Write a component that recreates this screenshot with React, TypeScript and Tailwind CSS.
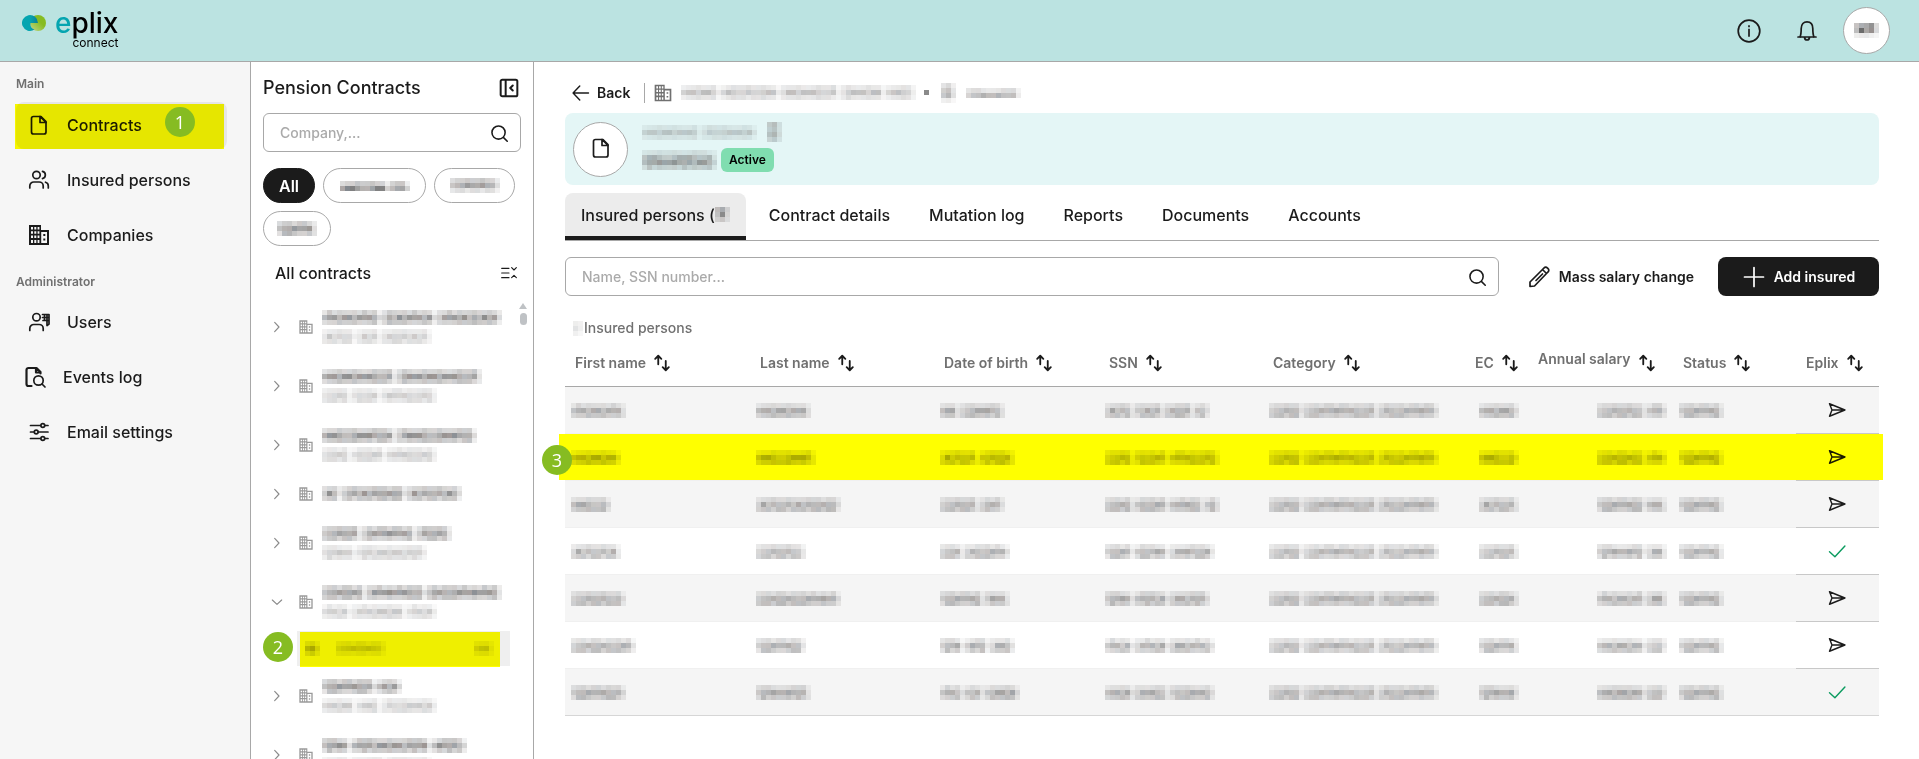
import { useState } from 'react';
import type { ReactNode } from 'react';

interface IconProps {
  className?: string;
}

function StrokeIcon({ className, children }: IconProps & { children: ReactNode }) {
  return (
    <svg
      viewBox="0 0 24 24"
      fill="none"
      stroke="currentColor"
      strokeWidth={1.7}
      strokeLinecap="round"
      strokeLinejoin="round"
      aria-hidden="true"
      className={`shrink-0 ${className ?? 'size-6'}`}
    >
      {children}
    </svg>
  );
}

const FileIcon = ({ className }: IconProps) => (
  <StrokeIcon className={className}>
    <path d="M6.5 3.5h7.5l5 5V19a2 2 0 0 1-2 2H6.500a2 2 0 0 1-2-2V5.500a2 2 0 0 1 2-2Z" />
    <path d="M13 3.500V9.500H19L13 3.500Z" />
  </StrokeIcon>
);

const UsersIcon = ({ className }: IconProps) => (
  <StrokeIcon className={className}>
    <circle cx="9.500" cy="7" r="3.700" />
    <path d="M2.800 20v-2a4 4 0 0 1 4-4h5.400a4 4 0 0 1 4 4v2" />
    <path d="M15.500 3.400a3.700 3.700 0 0 1 0 7.200M18.500 14.200a3.800 3.800 0 0 1 2.800 3.700V20" />
  </StrokeIcon>
);

const BuildingIcon = ({ className }: IconProps) => (
  <svg
    viewBox="0 0 24 24"
    fill="currentColor"
    fillRule="evenodd"
    aria-hidden="true"
    className={`shrink-0 ${className ?? 'size-6'}`}
  >
    <path d="M2 2h12v5h8v15H2V2Zm2 2v2.500h2V4H4Zm3.300 0v2.500h2V4h-2Zm3.300 0v2.500h1.800V4h-1.800ZM4 8.200v2.500h2V8.200H4Zm3.300 0v2.500h2V8.200h-2Zm3.300 0v2.500h1.800V8.200h-1.800ZM4 12.600v2.500h2v-2.500H4Zm3.300 0v2.500h2v-2.500h-2Zm3.300 0v2.500h1.800v-2.500h-1.800ZM4 17v3h2v-3H4Zm3.300 0v3h2v-3h-2Zm3.300 0v3h1.800v-3h-1.800ZM14.200 9v11H20V9h-5.800Z" />
    <path d="M16.300 11h2v2h-2zM16.300 15.500h2v2h-2z" />
  </svg>
);

const AdminUsersIcon = ({ className }: IconProps) => (
  <StrokeIcon className={className}>
    <circle cx="9.500" cy="7.200" r="3.700" />
    <path d="M2.800 20.500v-2a4 4 0 0 1 4-4h5.400a4 4 0 0 1 4 4v2" />
    <path d="M15.500 4.500H22V14l-2 1.500V4.500M17.500 4.500v6M15.500 7.500H22M16 10.500h6" />
  </StrokeIcon>
);

const EventsIcon = ({ className }: IconProps) => (
  <StrokeIcon className={className}>
    <path d="M8.500 21H5.500a2 2 0 0 1-2-2V5a2 2 0 0 1 2-2h8l4 4v1.500M13 3v4.500h4" strokeWidth={2.200} />
    <circle cx="15.500" cy="15.500" r="4.700" />
    <path d="m19 19 3 3" />
  </StrokeIcon>
);

const SlidersIcon = ({ className }: IconProps) => (
  <StrokeIcon className={className}>
    <path d="M3.500 5.500h10M18 5.500h3M3.500 12H7M11.500 12H21M3.500 18.500h10M18 18.500h3" />
    <circle cx="15.800" cy="5.500" r="1.900" />
    <circle cx="9.200" cy="12" r="1.900" />
    <circle cx="15.800" cy="18.500" r="1.900" />
  </StrokeIcon>
);

const SearchIcon = ({ className }: IconProps) => (
  <StrokeIcon className={className}>
    <circle cx="11.500" cy="11.500" r="7.200" />
    <path d="m17 17 4 4" />
  </StrokeIcon>
);

const SortIcon = () => (
  <StrokeIcon className="size-5 text-[#1b1b1b]">
    <path d="M7.500 13.500V3.500M3.800 7l3.700-3.700L11.200 7M16.500 9.500v11M12.800 17l3.700 3.700 3.700-3.700" strokeWidth={2.200} />
  </StrokeIcon>
);

const SendIcon = () => (
  <StrokeIcon className="size-5">
    <path d="M3 4.500 21.500 12 3 19.500l3-7.500-3-7.500ZM6 12h15" />
  </StrokeIcon>
);

const CheckIcon = () => (
  <StrokeIcon className="size-5 text-[#0a9b5f]">
    <path d="m3 13 6.500 6L21.500 6" />
  </StrokeIcon>
);

const ChevronIcon = ({ open }: { open: boolean }) => (
  <StrokeIcon className="size-4 text-[#8a8a8a]">
    <path d={open ? 'm5 9 7 6.500L19 9' : 'm8.500 5 6.500 7-6.500 7'} />
  </StrokeIcon>
);

interface MosaicProps {
  words: number[]; // word lengths in 5px cells
  seed?: number;
  alphas?: number[]; // one base opacity per row of cells
  className?: string;
}

const TEXT_ROWS = [0.2, 0.46, 0.34];
const SOFT_ROWS = [0.14, 0.3, 0.2];
const STRONG_ROWS = [0.3, 0.6, 0.34];
const TINTS = ['96,96,98', '104,98,94', '92,98,106', '92,92,92', '110,100,98'];

// Pixelated stand-in for private text
function Mosaic({ words, seed = 1, alphas = TEXT_ROWS, className = '' }: MosaicProps) {
  const columns = words.flatMap((length, i) => [
    ...(i > 0 ? [0.35] : []),
    ...Array.from({ length }, (_, n) => (n === 0 ? 0.7 : 1)),
  ]);
  return (
    <svg
      width={columns.length * 5}
      height={alphas.length * 5}
      shapeRendering="crispEdges"
      aria-hidden="true"
      className={`block shrink-0 ${className}`}
    >
      {alphas.map((base, y) =>
        columns.map((weight, x) => {
          const noise = ((x * 37 + y * 61 + seed * 53 + x * x * 11) % 17) / 17;
          const edge = x === columns.length - 1 ? 0.4 : 1;
          const alpha = base * weight * edge * (0.7 + noise * 0.5);
          return (
            <rect
              key={`${x}-${y}`}
              x={x * 5}
              y={y * 5}
              width={5}
              height={5}
              fill={`rgba(${TINTS[(x * 3 + y + seed) % TINTS.length]},${alpha.toFixed(2)})`}
            />
          );
        }),
      )}
    </svg>
  );
}

const StepBadge = ({ step, className }: { step: number; className: string }) => (
  <span
    className={`absolute z-20 flex size-[30px] items-center justify-center rounded-full bg-[#86bc22] font-['Open_Sans',sans-serif] text-lg text-white ${className}`}
  >
    {step}
  </span>
);

function Logo() {
  return (
    <a href="#home" className="flex items-start gap-2">
      <svg width="25" height="18" viewBox="0 0 25 18" aria-hidden="true" className="mt-[3px]">
        <defs>
          <linearGradient id="leaf" x1="0" y1="1" x2="1" y2="0">
            <stop offset="0" stopColor="#c5d58c" />
            <stop offset="0.600" stopColor="#86bc22" />
          </linearGradient>
          <linearGradient id="wave" x1="0" y1="0" x2="1" y2="0">
            <stop offset="0.500" stopColor="#05a5b0" />
            <stop offset="1" stopColor="#0b7f96" />
          </linearGradient>
        </defs>
        <circle cx="16" cy="9" r="8" fill="url(#leaf)" />
        <path d="M16 9H8.500a6 6 0 0 0 4 6.600A8 8 0 1 1 16 9Z" fill="url(#wave)" />
      </svg>
      <span className="flex flex-col items-end">
        <span className="text-[28px] leading-6 font-medium text-black">
          <span className="text-[#05a5b0]">e</span>plix
        </span>
        <span className="text-xs leading-4 text-black">connect</span>
      </span>
    </a>
  );
}

function Header() {
  return (
    <header className="flex h-[62px] shrink-0 items-center border-b border-[#a8a8a8] bg-[#bbe3e1] pr-[29px] pl-[22px]">
      <Logo />
      <div className="ml-auto flex items-center">
        <button type="button" aria-label="Information" className="mr-[34px]">
          <StrokeIcon>
            <circle cx="12" cy="12" r="10.800" />
            <path d="M12 10.500v6.500M12 7v.5" strokeLinecap="square" />
          </StrokeIcon>
        </button>
        <button type="button" aria-label="Notifications" className="mr-6">
          <StrokeIcon>
            <path d="M3 18h18M5 18c1-2 1.200-4 1.200-8.500C6.200 5 8.700 2.800 12 2.800s5.800 2.200 5.800 6.700c0 4.500.2 6.500 1.200 8.500M9.500 18.500c.3 1.800 1.300 2.500 2.500 2.500s2.200-.7 2.500-2.500" />
          </StrokeIcon>
        </button>
        <button
          type="button"
          aria-label="Account"
          className="flex size-[47px] items-center justify-center rounded-full border border-[#a8a8a8] bg-white"
        >
          <Mosaic words={[5]} alphas={[0.6, 0.8, 0.15]} seed={4} />
        </button>
      </div>
    </header>
  );
}

interface NavItemProps {
  label: string;
  icon: ReactNode;
  current?: boolean;
  className?: string;
}

function NavItem({ label, icon, current = false, className = 'pl-[11px]' }: NavItemProps) {
  return (
    <a
      href={`#${label}`}
      aria-current={current ? 'page' : undefined}
      className={`relative flex h-[47px] items-center gap-4 rounded-lg pb-0.5 text-base font-medium ${className} ${current ? 'bg-[#e6e6e6]' : ''}`}
    >
      {icon}
      {label}
      {current && (
        <>
          <span className="absolute top-0.5 right-[3px] bottom-0 -left-px bg-[#ffff00] mix-blend-multiply" />
          <StepBadge step={1} className="top-[5px] left-[149px]" />
        </>
      )}
    </a>
  );
}

function Sidebar() {
  return (
    <nav className="w-[251px] shrink-0 border-r border-[#a8a8a8] bg-[#f6f6f6] pt-3.5 pr-[23px] pl-4">
      <h2 className="text-xs leading-4 font-semibold text-[#707070]">Main</h2>
      <div className="mt-2.5 flex flex-col gap-2">
        <NavItem label="Contracts" icon={<FileIcon />} current />
        <NavItem label="Insured persons" icon={<UsersIcon />} />
        <NavItem label="Companies" icon={<BuildingIcon />} />
      </div>
      <h2 className="mt-[15px] text-xs leading-4 font-semibold text-[#707070]">Administrator</h2>
      <div className="mt-[9px] flex flex-col gap-2">
        <NavItem label="Users" icon={<AdminUsersIcon />} />
        <NavItem label="Events log" icon={<EventsIcon />} className="pl-[7px]" />
        <NavItem label="Email settings" icon={<SlidersIcon />} />
      </div>
    </nav>
  );
}

interface SearchBoxProps {
  label: string;
  placeholder: string;
  className?: string;
}

function SearchBox({ label, placeholder, className = '' }: SearchBoxProps) {
  return (
    <label
      className={`flex h-[39px] items-center rounded-md border border-[#a8a8a8] bg-white pr-2.5 pl-4 ${className}`}
    >
      <input
        type="text"
        aria-label={label}
        placeholder={placeholder}
        className="min-w-0 flex-1 text-sm font-medium outline-none placeholder:text-[#aaaaaa]"
      />
      <SearchIcon className="size-[22px]" />
    </label>
  );
}

interface Contract {
  name: number[];
  detail?: number[];
  open?: boolean;
}

const contracts: Contract[] = [
  { name: [11, 10, 13], detail: [6, 4, 10] },
  { name: [14, 17], detail: [5, 5, 11] },
  { name: [14, 16], detail: [5, 6, 10] },
  { name: [3, 12, 11] },
  { name: [7, 10, 7], detail: [6, 14] },
  { name: [8, 11, 15], detail: [5, 10, 6], open: true },
  { name: [10, 5], detail: [6, 4, 11] },
  { name: [5, 15, 7], detail: [5, 6, 9] },
];

function ContractItem({ contract, seed }: { contract: Contract; seed: number }) {
  return (
    <li>
      <button
        type="button"
        aria-label={`Contract ${seed}`}
        aria-expanded={!!contract.open}
        className={`flex w-full items-center pl-1.5 ${contract.detail ? 'h-[59px]' : 'h-[39px]'}`}
      >
        <ChevronIcon open={!!contract.open} />
        <BuildingIcon className="mr-2 ml-[13px] size-4 text-[#9a9a9a]" />
        <span className="flex flex-col gap-1">
          <Mosaic words={contract.name} seed={seed} alphas={STRONG_ROWS} />
          {contract.detail && (
            <Mosaic words={contract.detail} seed={seed + 3} alphas={SOFT_ROWS} />
          )}
        </span>
      </button>
      {contract.open && (
        <div className="relative ml-[34px] flex h-[35px] w-[213px] items-center justify-between bg-[#efefef] pr-4 pl-2">
          <div className="flex items-center gap-4">
            <Mosaic words={[3]} seed={2} alphas={[0.25, 0.5, 0.3]} />
            <Mosaic words={[10]} seed={6} alphas={[0.15, 0.35, 0.12]} />
          </div>
          <Mosaic words={[4]} seed={3} alphas={[0.15, 0.3, 0.15]} />
          <span className="absolute top-px right-[10px] -bottom-px left-[3px] bg-[#ffff00] mix-blend-multiply" />
          <StepBadge step={2} className="top-px -left-[34px]" />
        </div>
      )}
    </li>
  );
}

function ContractsPanel() {
  const pill =
    'flex h-[35px] items-center justify-center rounded-full border text-base font-semibold';
  return (
    <section className="flex w-[283px] shrink-0 flex-col border-r border-[#a8a8a8] px-3 pt-3">
      <div className="flex h-7 items-center justify-between pr-0.5">
        <h1 className="text-lg font-medium">Pension Contracts</h1>
        <button type="button" aria-label="Collapse panel">
          <StrokeIcon className="size-5">
            <path
              d="M4 2h16a2 2 0 0 1 2 2v16a2 2 0 0 1-2 2H4a2 2 0 0 1-2-2V4a2 2 0 0 1 2-2ZM8 2v20M16.500 9l-3 3 3 3"
              strokeWidth={2.400}
            />
          </StrokeIcon>
        </button>
      </div>
      <SearchBox label="Company" placeholder="Company,..." className="mt-[11px]" />
      <div className="mt-4 flex flex-wrap gap-2">
        <button type="button" className={`${pill} w-[52px] border-[#1b1b1b] bg-[#1b1b1b] text-white`}>
          All
        </button>
        <button type="button" aria-label="Filter 1" className={`${pill} w-[103px] border-[#a8a8a8]`}>
          <Mosaic words={[9, 4]} seed={3} alphas={[0.35, 0.7]} />
        </button>
        <button type="button" aria-label="Filter 2" className={`${pill} w-[81px] border-[#a8a8a8]`}>
          <Mosaic words={[10]} seed={5} alphas={[0.3, 0.65, 0.2]} />
        </button>
        <button type="button" aria-label="Filter 3" className={`${pill} w-[68px] border-[#a8a8a8]`}>
          <Mosaic words={[8]} seed={7} alphas={[0.3, 0.6, 0.4]} />
        </button>
      </div>
      <div className="mt-[15px] flex h-6 items-center justify-between pr-1 pl-3">
        <h2 className="text-base font-medium">All contracts</h2>
        <button type="button" aria-label="Collapse all">
          <StrokeIcon className="size-4">
            <path d="M1 5h11M1 12h11M1 19h11M16 4l3.500 3.500L23 4M16 19l3.500-3.500L23 19" />
          </StrokeIcon>
        </button>
      </div>
      <div className="mt-3 flex min-h-0 flex-1">
        <ul className="min-w-0 flex-1 overflow-hidden">
          {contracts.map((contract, index) => (
            <ContractItem key={index} contract={contract} seed={index + 1} />
          ))}
        </ul>
        <div className="-mr-1.5 flex shrink-0 flex-col items-center gap-1 pt-1.5">
          <svg width="8" height="6" viewBox="0 0 8 6" fill="#bfc2c5" aria-hidden="true">
            <path d="M4 0 8 6H0Z" />
          </svg>
          <span className="h-3 w-[7px] rounded-full bg-[#bfc2c5]" />
        </div>
      </div>
    </section>
  );
}

function Breadcrumb() {
  return (
    <div className="flex h-[27px] items-center pt-1 pl-1.5">
      <a href="#back" className="flex items-center gap-1.5 text-sm font-semibold">
        <StrokeIcon className="size-5">
          <path d="M21 12H3M10.500 3.500 2.500 12l8 8.500" />
        </StrokeIcon>
        Back
      </a>
      <span className="ml-3.5 h-5 w-px bg-[#a8a8a8]" />
      <BuildingIcon className="ml-2 size-5 text-[#707070]" />
      <Mosaic words={[7, 11, 11, 8, 6]} seed={2} alphas={[0.18, 0.36, 0.18]} className="ml-2" />
      <span className="ml-2 size-[5px] bg-[#8a8a8a]" />
      <Mosaic words={[3]} seed={5} alphas={[0.25, 0.55, 0.45, 0.15]} className="ml-3" />
      <Mosaic words={[11]} seed={8} alphas={[0.2, 0.42]} className="ml-2.5" />
    </div>
  );
}

function ContractBanner() {
  return (
    <div className="mt-[9px] flex h-[72px] items-center rounded-lg bg-[#e4f6f6] pl-2">
      <div className="flex size-[55px] items-center justify-center rounded-full border border-[#a8a8a8] bg-white pb-0.5">
        <FileIcon />
      </div>
      <div className="ml-3.5 flex flex-col gap-1.5 pb-1">
        <div className="flex items-center gap-2.5">
          <Mosaic words={[11, 11]} seed={2} alphas={[0.14, 0.3, 0.14]} />
          <Mosaic words={[3]} seed={6} alphas={[0.4, 0.45, 0.42, 0.35]} />
        </div>
        <div className="flex items-center gap-1">
          <Mosaic words={[15]} seed={3} alphas={[0.16, 0.42, 0.55, 0.3]} />
          <span className="flex h-6 items-center rounded-md bg-[#80ddb0] px-2 text-xs font-semibold text-black">
            Active
          </span>
        </div>
      </div>
    </div>
  );
}

const tabs = [
  'Insured persons (',
  'Contract details',
  'Mutation log',
  'Reports',
  'Documents',
  'Accounts',
];

function Tabs() {
  const [active, setActive] = useState(tabs[0]);
  return (
    <div role="tablist" className="mt-2 flex gap-[7px] border-b border-[#a8a8a8]">
      {tabs.map((tab, index) => (
        <button
          key={tab}
          type="button"
          role="tab"
          aria-selected={tab === active}
          onClick={() => setActive(tab)}
          className={`flex h-[47px] items-center rounded-t-lg border-b-4 px-4 text-base font-medium ${
            tab === active ? 'border-[#1b1b1b] bg-[#ececec]' : 'border-transparent'
          }`}
        >
          {tab}
          {index === 0 && <Mosaic words={[3]} seed={4} alphas={[0.55, 0.6, 0.3]} />}
        </button>
      ))}
    </div>
  );
}

function Toolbar() {
  return (
    <div className="mt-4 flex items-center">
      <SearchBox label="Search insured persons" placeholder="Name, SSN number..." className="flex-1" />
      <button type="button" className="ml-7 flex items-center gap-2 text-sm font-semibold">
        <StrokeIcon>
          <path d="M3 21.500V17L15.500 4.500l4 4L7.500 21 3 21.500ZM15.500 4.500l1.600-1.600a2.200 2.200 0 0 1 3.200 0l.8.8a2.200 2.200 0 0 1 0 3.200l-1.600 1.600M9 15.500l6.500-6.500" />
        </StrokeIcon>
        Mass salary change
      </button>
      <button
        type="button"
        className="ml-6 flex h-[39px] w-[161px] items-center justify-center gap-2 rounded-lg bg-[#1b1b1b] text-sm font-semibold text-white"
      >
        <StrokeIcon>
          <path d="M12 2.500v19M2.500 12h19" />
        </StrokeIcon>
        Add insured
      </button>
    </div>
  );
}

const columns = [
  { label: 'First name', width: 'w-[185px]' },
  { label: 'Last name', width: 'w-[184px]' },
  { label: 'Date of birth', width: 'w-[165px]' },
  { label: 'SSN', width: 'w-[164px]' },
  { label: 'Category', width: 'w-[202px]' },
  { label: 'EC', width: 'w-[65px]' },
  { label: 'Annual salary', width: 'w-[143px]' },
  { label: 'Status', width: 'w-[123px]' },
  { label: 'Eplix', width: 'w-[83px]' },
];

interface Person {
  first: number[];
  last: number[];
  birth: number[];
  ssn: number[];
  done?: boolean;
  highlighted?: boolean;
}

const people: Person[] = [
  { first: [11], last: [11], birth: [3, 9], ssn: [5, 5, 5, 3] },
  { first: [10], last: [12], birth: [7, 7], ssn: [5, 6, 10], highlighted: true },
  { first: [8], last: [17], birth: [7, 5], ssn: [5, 6, 6, 3] },
  { first: [10], last: [10], birth: [4, 9], ssn: [5, 6, 9], done: true },
  { first: [11], last: [17], birth: [8, 5], ssn: [5, 6, 8] },
  { first: [13], last: [10], birth: [4, 4, 5], ssn: [5, 6, 9] },
  { first: [11], last: [11], birth: [4, 3, 7], ssn: [5, 6, 9], done: true },
];

function PersonRow({ person, index }: { person: Person; index: number }) {
  const last = index === people.length - 1;
  const cell = `h-[47px] border-b pl-1.5 ${last ? 'border-[#d6d6d6]' : 'border-[#f0f0f0]'}`;
  return (
    <tr className={index % 2 === 0 ? 'bg-[#f5f5f5]' : 'bg-white'}>
      <td className={`relative ${cell}`}>
        <Mosaic words={person.first} seed={index + 1} />
        {person.highlighted && <StepBadge step={3} className="top-[11px] -left-[23px]" />}
      </td>
      <td className={cell}>
        <Mosaic words={person.last} seed={index + 2} />
      </td>
      <td className={cell}>
        <Mosaic words={person.birth} seed={index + 3} />
      </td>
      <td className={cell}>
        <Mosaic words={person.ssn} seed={index + 4} />
      </td>
      <td className={cell}>
        <Mosaic words={[6, 14, 12]} seed={5} />
      </td>
      <td className={cell}>
        <Mosaic words={[8]} seed={index + 2} className="ml-2" />
      </td>
      <td className={cell}>
        <Mosaic words={[9, 4]} seed={index + 5} className="mr-1.5 ml-auto" />
      </td>
      <td className={cell}>
        <Mosaic words={[9]} seed={7} />
      </td>
      <td className={`h-[47px] border-b pl-[31px] ${last ? 'border-[#d6d6d6]' : 'border-[#c8c8c8]'}`}>
        {person.done ? <CheckIcon /> : <SendIcon />}
      </td>
    </tr>
  );
}

function PersonsTable() {
  return (
    <div className="relative mt-5">
      <table className="w-full table-fixed border-separate border-spacing-0 text-left">
        <caption className="h-6 pl-2 text-left text-sm font-medium text-[#707070]">
          <span className="flex h-6 items-center">
            <Mosaic words={[2]} seed={1} alphas={[0.2, 0.25, 0.15]} />
            <span className="pl-px">Insured persons</span>
          </span>
        </caption>
        <thead>
          <tr>
            {columns.map(({ label, width }) => (
              <th
                key={label}
                scope="col"
                className={`${width} h-[47px] border-b border-[#a8a8a8] p-0 text-sm font-semibold text-[#707070]`}
              >
                <button
                  type="button"
                  className={`flex items-center gap-1.5 whitespace-nowrap ${label === 'Annual salary' ? 'pl-2' : 'pl-2.5'}`}
                >
                  <span className={label === 'Annual salary' ? 'pb-2' : ''}>{label}</span>
                  <SortIcon />
                </button>
              </th>
            ))}
          </tr>
        </thead>
        <tbody>
          {people.map((person, index) => (
            <PersonRow key={index} person={person} index={index} />
          ))}
        </tbody>
      </table>
      {/* marker over the second row */}
      <div className="pointer-events-none absolute top-[118px] -right-1 -left-1.5 h-[46px] bg-[#ffff00] mix-blend-multiply" />
    </div>
  );
}

export default function App() {
  return (
    <div className="flex h-screen flex-col overflow-hidden bg-white font-[Inter,'Liberation_Sans',sans-serif] text-[#1b1b1b]">
      <Header />
      <div className="flex min-h-0 flex-1">
        <Sidebar />
        <ContractsPanel />
        <main className="min-w-0 flex-1 pt-[15px] pr-10 pl-[31px]">
          <Breadcrumb />
          <ContractBanner />
          <Tabs />
          <Toolbar />
          <PersonsTable />
        </main>
      </div>
    </div>
  );
}
